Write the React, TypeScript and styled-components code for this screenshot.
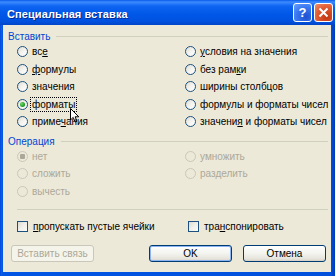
import React from 'react';
import styled, { createGlobalStyle, css } from 'styled-components';

const GlobalStyle = createGlobalStyle`
  html, body {
    margin: 0;
    padding: 0;
    background: #0055e5;
  }
  body {
    font-family: 'Liberation Sans', Arial, sans-serif;
    font-size: 10px;
  }
`;

const Window = styled.div`
  width: 335px;
  height: 276px;
  display: flex;
  flex-direction: column;
  background: linear-gradient(to right, #0040c8 0, #0a5ef0 1px, #0055e5 3px, #0050dc 331px, #003bb8 335px);
  overflow: hidden;
`;

const TitleBar = styled.div`
  height: 25px;
  flex: none;
  display: flex;
  align-items: center;
  padding: 0 2px 0 7px;
  background: linear-gradient(
    to bottom,
    #0a5be8 0,
    #3d8bff 2px,
    #0f65f2 6px,
    #0058e8 14px,
    #0052e0 21px,
    #0046c8 25px
  );
`;

const Title = styled.div`
  flex: 1;
  color: #fff;
  font-weight: bold;
  font-size: 11px;
  letter-spacing: 0.1px;
  text-shadow: 1px 1px 0 #0a2a90;
  padding-top: 2px;
`;

const CaptionButton = styled.div<{ $kind: 'help' | 'close' }>`
  width: 19px;
  height: 19px;
  box-sizing: border-box;
  margin-left: 2px;
  border: 1px solid #fff;
  border-radius: 3px;
  display: flex;
  align-items: center;
  justify-content: center;
  color: #fff;
  font-weight: bold;
  font-size: 13px;
  ${(p) =>
    p.$kind === 'help'
      ? css`
          background: radial-gradient(circle at 70% 75%, #2050d0 0, #3a78f0 55%, #6aa0ff 100%);
        `
      : css`
          background: radial-gradient(circle at 70% 75%, #c03410 0, #e25a30 55%, #f09070 100%);
        `}
`;

const Client = styled.div`
  flex: 1;
  margin: 0 4px 4px 3px;
  background: #ece9d8;
  padding: 5px 3px 0 5px;
  display: flex;
  flex-direction: column;
  color: #000;
`;

const GroupHeader = styled.div<{ $gap?: number }>`
  height: 13px;
  display: flex;
  align-items: center;
  gap: 6px;
  margin-top: ${(p) => p.$gap ?? 0}px;
`;

const GroupLabel = styled.span`
  color: #0046d5;
  font-size: 10px;
`;

const GroupLine = styled.div`
  flex: 1;
  height: 1px;
  background: #d0d0bf;
`;

const OptionGrid = styled.div`
  display: grid;
  grid-template-columns: 168px 1fr;
  grid-auto-rows: 17.5px;
  margin-left: 9px;
`;

const OptionRow = styled.label<{ $disabled?: boolean }>`
  position: relative;
  display: flex;
  align-items: center;
  gap: 4px;
  white-space: nowrap;
  color: ${(p) => (p.$disabled ? '#aca899' : '#000')};
`;

const RadioCircle = styled.span<{ $disabled?: boolean }>`
  width: 11px;
  height: 11px;
  box-sizing: border-box;
  flex: none;
  border-radius: 50%;
  display: flex;
  align-items: center;
  justify-content: center;
  border: 1px solid ${(p) => (p.$disabled ? '#cac8bb' : '#1c5180')};
  background: ${(p) =>
    p.$disabled ? '#ece9d8' : 'linear-gradient(135deg, #dcdbd2 0%, #f4f3ee 50%, #ffffff 100%)'};
`;

const RadioDot = styled.span<{ $disabled?: boolean }>`
  width: 5px;
  height: 5px;
  border-radius: ${(p) => (p.$disabled ? '1px' : '50%')};
  background: ${(p) =>
    p.$disabled ? '#aca899' : 'radial-gradient(circle at 35% 35%, #6fd86f 0, #21a121 60%, #137013 100%)'};
`;

const OptionText = styled.span<{ $focused?: boolean }>`
  padding: 1px;
  border: 1px dotted ${(p) => (p.$focused ? '#000' : 'transparent')};
  margin-left: -2px;
`;

const Key = styled.span`
  text-decoration: underline;
`;

const Cursor = styled.svg`
  position: absolute;
  left: 53px;
  top: 12px;
`;

const Separator = styled.div`
  height: 1px;
  background: #d0d0bf;
  margin: 9px 0 0 9px;
`;

const CheckRow = styled.div`
  display: grid;
  grid-template-columns: 171px 1fr;
  height: 13px;
  margin: 10px 0 0 9px;
`;

const CheckItem = styled.label`
  display: flex;
  align-items: center;
  gap: 5px;
  white-space: nowrap;
`;

const CheckBox = styled.span`
  width: 11px;
  height: 11px;
  box-sizing: border-box;
  flex: none;
  border: 1px solid #1c5180;
  background: linear-gradient(135deg, #dcdbd2 0%, #f0efe9 50%, #fbfbf8 100%);
`;

const ButtonRow = styled.div`
  display: flex;
  align-items: center;
  margin: 12px 2px 0 3px;
`;

const Button = styled.div<{ $disabled?: boolean; $default?: boolean; $push?: boolean }>`
  width: 83px;
  height: 17px;
  box-sizing: border-box;
  display: flex;
  align-items: center;
  justify-content: center;
  border-radius: 3px;
  font-size: 10px;
  margin-left: ${(p) => (p.$push ? 'auto' : '11px')};
  &:first-child {
    margin-left: 0;
  }
  ${(p) =>
    p.$disabled
      ? css`
          border: 1px solid #c9c7ba;
          color: #aca899;
          background: #f5f4ea;
        `
      : css`
          border: 1px solid #003c74;
          color: #000;
          background: linear-gradient(to bottom, #ffffff 0%, #f3f3ef 50%, #e6e4db 85%, #d6d0c5 100%);
        `}
  ${(p) =>
    p.$default &&
    css`
      box-shadow: inset 0 0 0 1px #8cb4f2;
    `}
`;

type Opt = {
  label: React.ReactNode;
  checked?: boolean;
  disabled?: boolean;
  focused?: boolean;
  cursor?: boolean;
};

function Radio({ label, checked, disabled, focused, cursor }: Opt) {
  return (
    <OptionRow $disabled={disabled}>
      <RadioCircle $disabled={disabled}>{checked && <RadioDot $disabled={disabled} />}</RadioCircle>
      <OptionText $focused={focused}>{label}</OptionText>
      {cursor && (
        <Cursor width="11" height="15" viewBox="0 0 11 15">
          <path
            d="M0.5 0.5 L0.5 12 L3.2 9.4 L5.2 14 L7 13.2 L5.1 8.8 L8.8 8.8 Z"
            fill="#fff"
            stroke="#000"
            strokeWidth="1"
          />
        </Cursor>
      )}
    </OptionRow>
  );
}

const pasteLeft: Opt[] = [
  { label: <>вс<Key>е</Key></> },
  { label: <><Key>ф</Key>ормулы</> },
  { label: 'значения' },
  { label: 'форматы', checked: true, focused: true, cursor: true },
  { label: <>приме<Key>ч</Key>ания</> },
];

const pasteRight: Opt[] = [
  { label: <><Key>у</Key>словия на значения</> },
  { label: <>без рам<Key>к</Key>и</> },
  { label: 'ширины столбцов' },
  { label: 'формулы и форматы чисел' },
  { label: <>значени<Key>я</Key> и форматы чисел</> },
];

const opLeft: Opt[] = [
  { label: 'нет', checked: true, disabled: true },
  { label: 'сложить', disabled: true },
  { label: 'вычесть', disabled: true },
];

const opRight: Opt[] = [
  { label: 'умножить', disabled: true },
  { label: 'разделить', disabled: true },
];

function interleave(left: Opt[], right: Opt[]) {
  const out: React.ReactNode[] = [];
  const n = Math.max(left.length, right.length);
  for (let i = 0; i < n; i++) {
    out.push(left[i] ? <Radio key={`l${i}`} {...left[i]} /> : <span key={`l${i}`} />);
    out.push(right[i] ? <Radio key={`r${i}`} {...right[i]} /> : <span key={`r${i}`} />);
  }
  return out;
}

export default function App() {
  return (
    <>
      <GlobalStyle />
      <Window>
        <TitleBar>
          <Title>Специальная вставка</Title>
          <CaptionButton $kind="help">?</CaptionButton>
          <CaptionButton $kind="close">
            <svg width="11" height="11" viewBox="0 0 11 11">
              <path d="M1.5 1.5 L9.5 9.5 M9.5 1.5 L1.5 9.5" stroke="#fff" strokeWidth="2" />
            </svg>
          </CaptionButton>
        </TitleBar>
        <Client>
          <GroupHeader>
            <GroupLabel>Вставить</GroupLabel>
            <GroupLine />
          </GroupHeader>
          <OptionGrid>{interleave(pasteLeft, pasteRight)}</OptionGrid>

          <GroupHeader $gap={4}>
            <GroupLabel>Операция</GroupLabel>
            <GroupLine />
          </GroupHeader>
          <OptionGrid>{interleave(opLeft, opRight)}</OptionGrid>

          <Separator />

          <CheckRow>
            <CheckItem>
              <CheckBox />
              <span><Key>п</Key>ропускать пустые ячейки</span>
            </CheckItem>
            <CheckItem>
              <CheckBox />
              <span>тра<Key>н</Key>спонировать</span>
            </CheckItem>
          </CheckRow>

          <ButtonRow>
            <Button $disabled>Вставить связь</Button>
            <Button $push $default>OK</Button>
            <Button>Отмена</Button>
          </ButtonRow>
        </Client>
      </Window>
    </>
  );
}
